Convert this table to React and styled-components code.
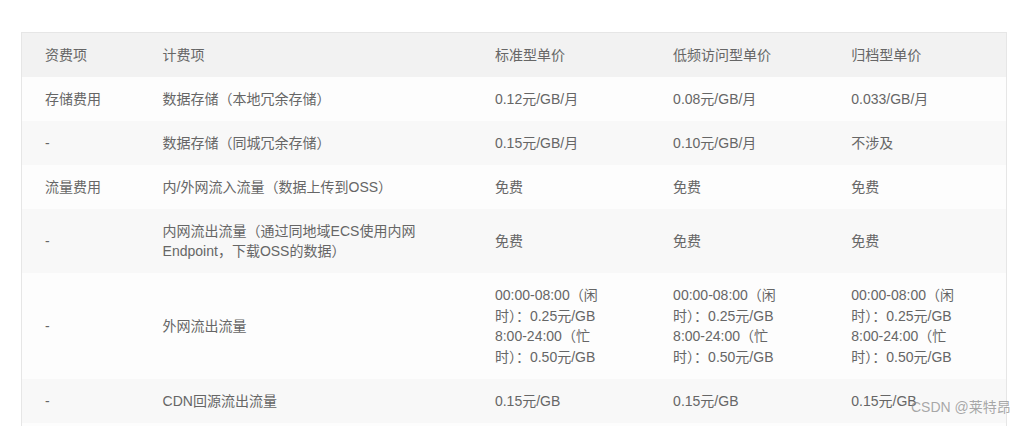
import React from 'react'
import styled, { createGlobalStyle } from 'styled-components'

const GlobalStyle = createGlobalStyle`
  html, body {
    margin: 0;
    padding: 0;
    background: #fff;
  }
  body {
    font-family: "Liberation Sans", Arial, "Noto Sans CJK SC", sans-serif;
    color: #666;
  }
`

const columns = [
  { title: '资费项', width: 118 },
  { title: '计费项', width: 332 },
  { title: '标准型单价', width: 178, price: true },
  { title: '低频访问型单价', width: 178, price: true },
  { title: '归档型单价', width: 178, price: true },
]

const peak = '00:00-08:00（闲时）：0.25元/GB 8:00-24:00（忙时）：0.50元/GB'

const rows = [
  ['存储费用', '数据存储（本地冗余存储）', '0.12元/GB/月', '0.08元/GB/月', '0.033/GB/月'],
  ['-', '数据存储（同城冗余存储）', '0.15元/GB/月', '0.10元/GB/月', '不涉及'],
  ['流量费用', '内/外网流入流量（数据上传到OSS）', '免费', '免费', '免费'],
  ['-', '内网流出流量（通过同地域ECS使用内网Endpoint，下载OSS的数据）', '免费', '免费', '免费'],
  ['-', '外网流出流量', peak, peak, peak],
  ['-', 'CDN回源流出流量', '0.15元/GB', '0.15元/GB', '0.15元/GB'],
]

export default function App() {
  return (
    <>
      <GlobalStyle />
      <Page>
        <PriceTable>
          <colgroup>
            {columns.map((col) => (
              <col key={col.title} style={{ width: col.width }} />
            ))}
          </colgroup>
          <thead>
            <tr>
              {columns.map((col) => (
                <HeadCell key={col.title} price={col.price}>
                  {col.title}
                </HeadCell>
              ))}
            </tr>
          </thead>
          <tbody>
            {rows.map((row, index) => (
              <Row key={index} striped={index % 2 === 1}>
                {row.map((text, i) => (
                  <Cell key={i} price={columns[i].price}>
                    {text}
                  </Cell>
                ))}
              </Row>
            ))}
            <Row>
              <Cell colSpan={5}>&nbsp;</Cell>
            </Row>
          </tbody>
        </PriceTable>
        <Watermark>CSDN @莱特昂</Watermark>
      </Page>
    </>
  )
}

const Page = styled.div`
  position: relative;
  height: 426px;
  overflow: hidden;
  padding: 32px 0 0 21px;
  box-sizing: border-box;
`

const PriceTable = styled.table`
  width: 986px;
  table-layout: fixed;
  border-collapse: collapse;
  border: 1px solid #e6e6e6;
  font-size: 14px;
  line-height: 20.6px;
  color: #666;
`

const HeadCell = styled.th`
  background: #f2f2f2;
  font-weight: normal;
  text-align: left;
  padding: 11.7px ${({ price }) => (price ? '44px' : '23px')} 11.7px 23px;
`

const Row = styled.tr`
  background: ${({ striped }) => (striped ? '#f8f8f8' : '#fdfdfd')};
`

const Cell = styled.td`
  padding: 11.7px ${({ price }) => (price ? '44px' : '23px')} 11.7px 23px;
  vertical-align: middle;
  word-break: normal;
`

const Watermark = styled.div`
  position: absolute;
  left: 911px;
  top: 398px;
  font-size: 14px;
  line-height: 18px;
  color: rgba(140, 140, 140, 0.75);
  white-space: nowrap;
`
